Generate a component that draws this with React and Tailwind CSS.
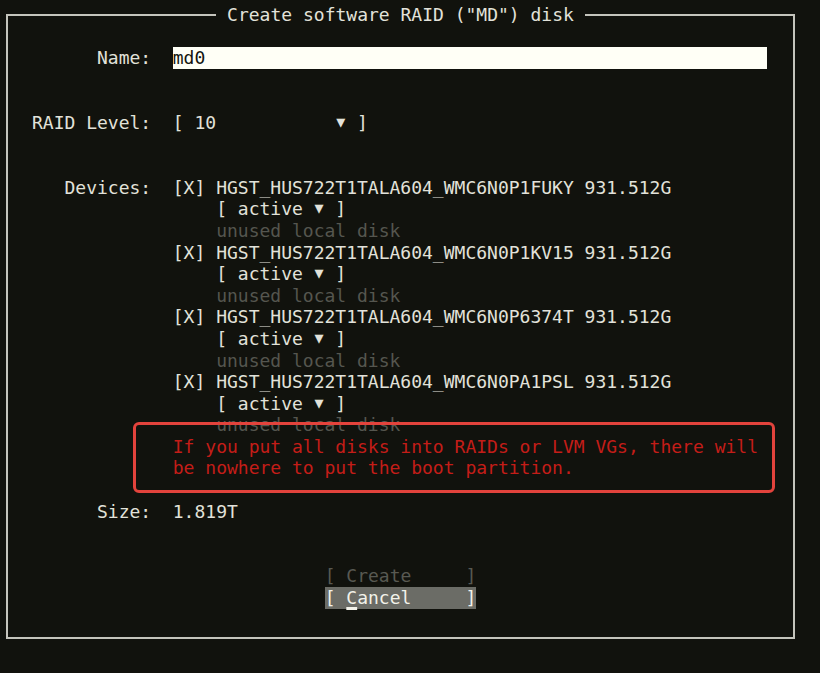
import React from 'react';

const devices = [
  'HGST_HUS722T1TALA604_WMC6N0P1FUKY',
  'HGST_HUS722T1TALA604_WMC6N0P1KV15',
  'HGST_HUS722T1TALA604_WMC6N0P6374T',
  'HGST_HUS722T1TALA604_WMC6N0PA1PSL',
];

// small dropdown arrow, one character cell wide
const Tri = () => (
  <span className="inline-block w-[10.84px] text-center text-[15px] align-top">▼</span>
);

const Row = ({ label, className = '', children }) => (
  <div className={`flex ${className}`}>
    <div className="w-[143.2px] shrink-0 text-right whitespace-pre">{label}</div>
    <div className="ml-[21.6px] flex-1 whitespace-pre">{children}</div>
  </div>
);

const App = () => {
  return (
    <div
      className="w-[820px] h-[673px] bg-[#11120d] text-[#e2e2da] text-[18px] leading-[21.6px] overflow-hidden"
      style={{ fontFamily: '"DejaVu Sans Mono", "Liberation Mono", monospace' }}
    >
      <fieldset className="ml-[6px] mt-[4px] w-[789px] border-2 border-[#c4c4bc] pb-[28px]">
        <legend className="mx-auto whitespace-pre leading-[21.6px]"> Create software RAID ("MD") disk </legend>

        <Row label="Name:" className="mt-[21.6px]">
          <div className="w-[594px] bg-[#fffff6] text-[#15150f]">md0</div>
        </Row>

        <Row label="RAID Level:" className="mt-[43.2px]">
          {'[ 10           '}<Tri />{' ]'}
        </Row>

        <Row label="Devices:" className="mt-[43.2px]">
          {devices.map((d) => (
            <div key={d}>
              <div>{`[X] ${d} 931.512G`}</div>
              <div>{'    [ active '}<Tri />{' ]'}</div>
              <div className="text-[#55564f]">{'    unused local disk'}</div>
            </div>
          ))}
        </Row>

        <Row label="">
          <div className="relative text-[#c41d18]">
            <div>If you put all disks into RAIDs or LVM VGs, there will</div>
            <div>be nowhere to put the boot partition.</div>
            <div className="absolute left-[-40px] top-[-14px] w-[642px] h-[71px] border-[3px] border-[#e3433c] rounded-[6px]" />
          </div>
        </Row>

        <Row label="Size:" className="mt-[21.6px]">
          1.819T
        </Row>

        <div className="mt-[43.2px] flex flex-col items-center">
          <div className="whitespace-pre text-[#585952]">{'[ Create     ]'}</div>
          <div className="whitespace-pre bg-[#6b6c66] text-[#f2f2ea]">
            {'[ '}
            <span className="underline decoration-[3px] underline-offset-[3px]">C</span>
            {'ancel     ]'}
          </div>
        </div>
      </fieldset>
    </div>
  );
};

export default App;
